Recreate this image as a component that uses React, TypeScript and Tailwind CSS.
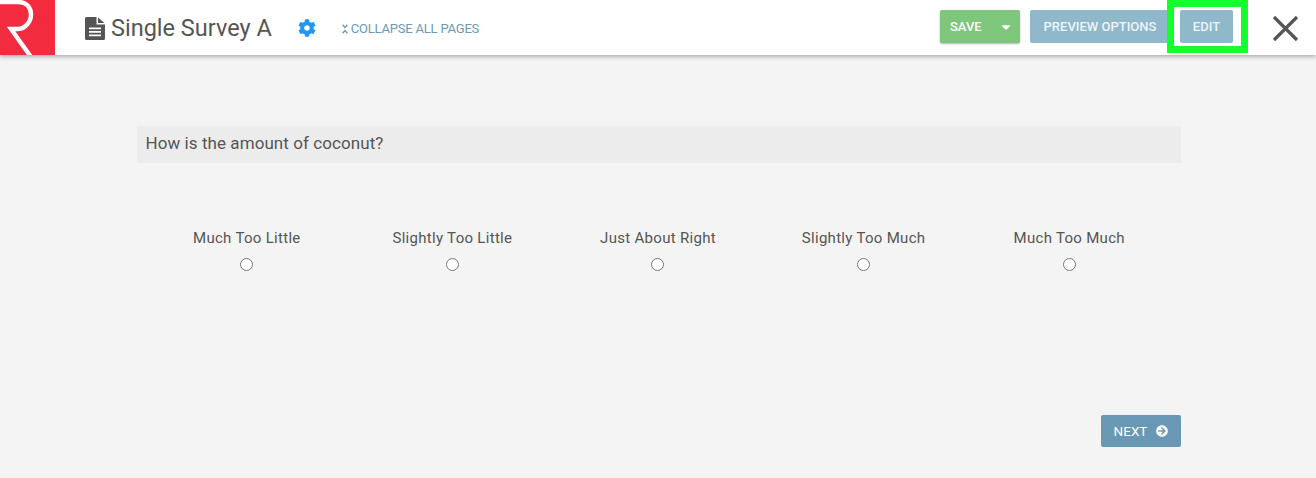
import { FaArrowCircleRight, FaCaretDown, FaCog } from "react-icons/fa";

const options = [
  "Much Too Little",
  "Slightly Too Little",
  "Just About Right",
  "Slightly Too Much",
  "Much Too Much",
];

const Logo = () => (
  <div className="w-[55px] h-[55px] bg-[#f22b3e] shrink-0">
    <svg width="55" height="55" viewBox="0 0 55 55" fill="none">
      <path
        d="M0 2H18C27 2 31 8 31 14.5C31 22 25 29 18 29H11L31 57"
        stroke="#fff"
        strokeWidth="4.4"
      />
    </svg>
  </div>
);

const FileIcon = () => (
  <svg width="20" height="23" viewBox="0 0 20 23" className="shrink-0 ml-[30px] mt-[2px]">
    <path
      d="M1.5 0H11.5V7.5H20V21.5A1.5 1.5 0 0 1 18.5 23H1.5A1.5 1.5 0 0 1 0 21.5V1.5A1.5 1.5 0 0 1 1.5 0Z"
      fill="#555"
    />
    <path d="M13 0.5L19.5 6H13Z" fill="#555" />
    <path d="M4 10.5H16V12.2H4ZM4 14H16V15.7H4ZM4 17.5H16V19.2H4Z" fill="#fff" />
  </svg>
);

const CollapseIcon = () => (
  <svg width="6" height="10" viewBox="0 0 6 10" fill="none" className="shrink-0">
    <path d="M0.6 0.8L3 3.4L5.4 0.8M0.6 9.2L3 6.6L5.4 9.2" stroke="#6a9ab5" strokeWidth="1.4" />
  </svg>
);

const Header = () => (
  <header className="h-[55px] bg-white flex items-center shadow-[0_1px_5px_rgba(0,0,0,0.4)] relative">
    <Logo />
    <FileIcon />
    <h1 className="ml-[6px] mt-[2px] text-[23.5px] text-[#555] leading-none">Single Survey A</h1>
    <FaCog className="ml-[26px] mt-[1px] text-[#2196f3] text-[18px] shrink-0" />
    <a className="ml-[26px] mt-[2px] flex items-center gap-[3px] text-[13px] text-[#6a9ab5] uppercase tracking-[-0.2px]">
      <CollapseIcon />
      Collapse all pages
    </a>
    <div className="ml-auto flex items-center mb-[2px]">
      <button className="w-[80px] h-[33px] rounded-[2px] bg-[#7dc67b] text-white text-[13px] font-medium flex items-center pl-[10px] pr-[7px] justify-between shadow-[0_1px_2px_rgba(0,0,0,0.3)]">
        SAVE
        <FaCaretDown className="text-[14px]" />
      </button>
      <button className="ml-[10px] w-[140px] h-[33px] rounded-l-[2px] bg-[#90b8cb] text-[#eef4f7] text-[13px] font-medium text-center">
        PREVIEW OPTIONS
      </button>
      <div className="relative ml-[10px]">
        <button className="w-[53px] h-[33px] rounded-[2px] bg-[#90b8cb] text-[#eef4f7] text-[13px] font-medium block">
          EDIT
        </button>
        <div className="absolute -left-[13px] -right-[15px] -top-[10px] -bottom-[10px] border-[7px] border-[#14ff2b]" />
      </div>
    </div>
    <svg width="27" height="27" viewBox="0 0 27 27" fill="none" className="ml-[39px] mr-[17px] mt-[2px] shrink-0">
      <path d="M2 2L25 25M25 2L2 25" stroke="#555" strokeWidth="3.2" />
    </svg>
  </header>
);

export default function App() {
  return (
    <div className="h-[478px] bg-[#f4f4f4] font-['Roboto',sans-serif] overflow-hidden">
      <Header />
      <main className="w-[1044px] ml-[137px] pt-[71px]">
        <div className="h-[37px] bg-[#ececec] pl-[8.5px] pb-[2px] flex items-center text-[17px] tracking-[0.07px] text-[#555]">
          How is the amount of coconut?
        </div>
        <div className="grid grid-cols-5 pl-[7px] pr-[9px] mt-[65px]">
          {options.map((label) => (
            <label key={label} className="flex flex-col items-center text-[15px] tracking-[0.3px] text-[#555] leading-5">
              {label}
              <input type="radio" name="coconut" className="mt-[10px] m-0" />
            </label>
          ))}
        </div>
        <div className="flex justify-end mt-[144px]">
          <button className="w-[80px] h-[32px] rounded-[2px] bg-[#6898b3] text-white text-[13.5px] flex items-center justify-center gap-[9px]">
            NEXT
            <FaArrowCircleRight className="text-[12px]" />
          </button>
        </div>
      </main>
    </div>
  );
}
